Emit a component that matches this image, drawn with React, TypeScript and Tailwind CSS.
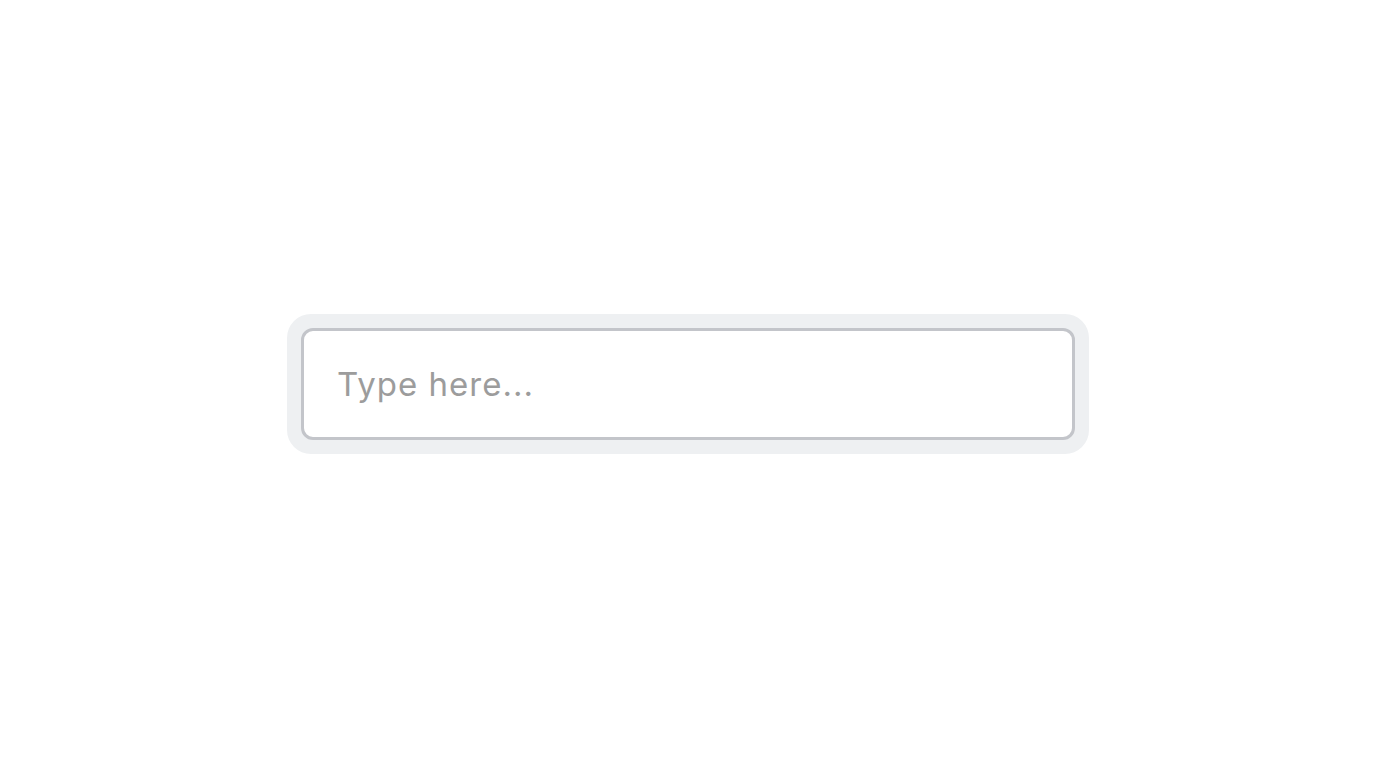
import React from 'react';

const App = () => {
  return (
    <div className="min-h-screen w-full flex items-center justify-center bg-white">
      <div className="w-[802px] h-[140px] p-[14px] rounded-[24px] bg-[#eef0f2]">
        <input
          type="text"
          placeholder="Type here..."
          className="w-full h-full rounded-[12px] border-[3px] border-[#c3c5ca] bg-white pl-[33px] pr-6 text-[33px] tracking-[1px] text-gray-700 placeholder:text-[#9c9c9c] outline-none font-['Inter',sans-serif]"
        />
      </div>
    </div>
  );
};

export default App;
